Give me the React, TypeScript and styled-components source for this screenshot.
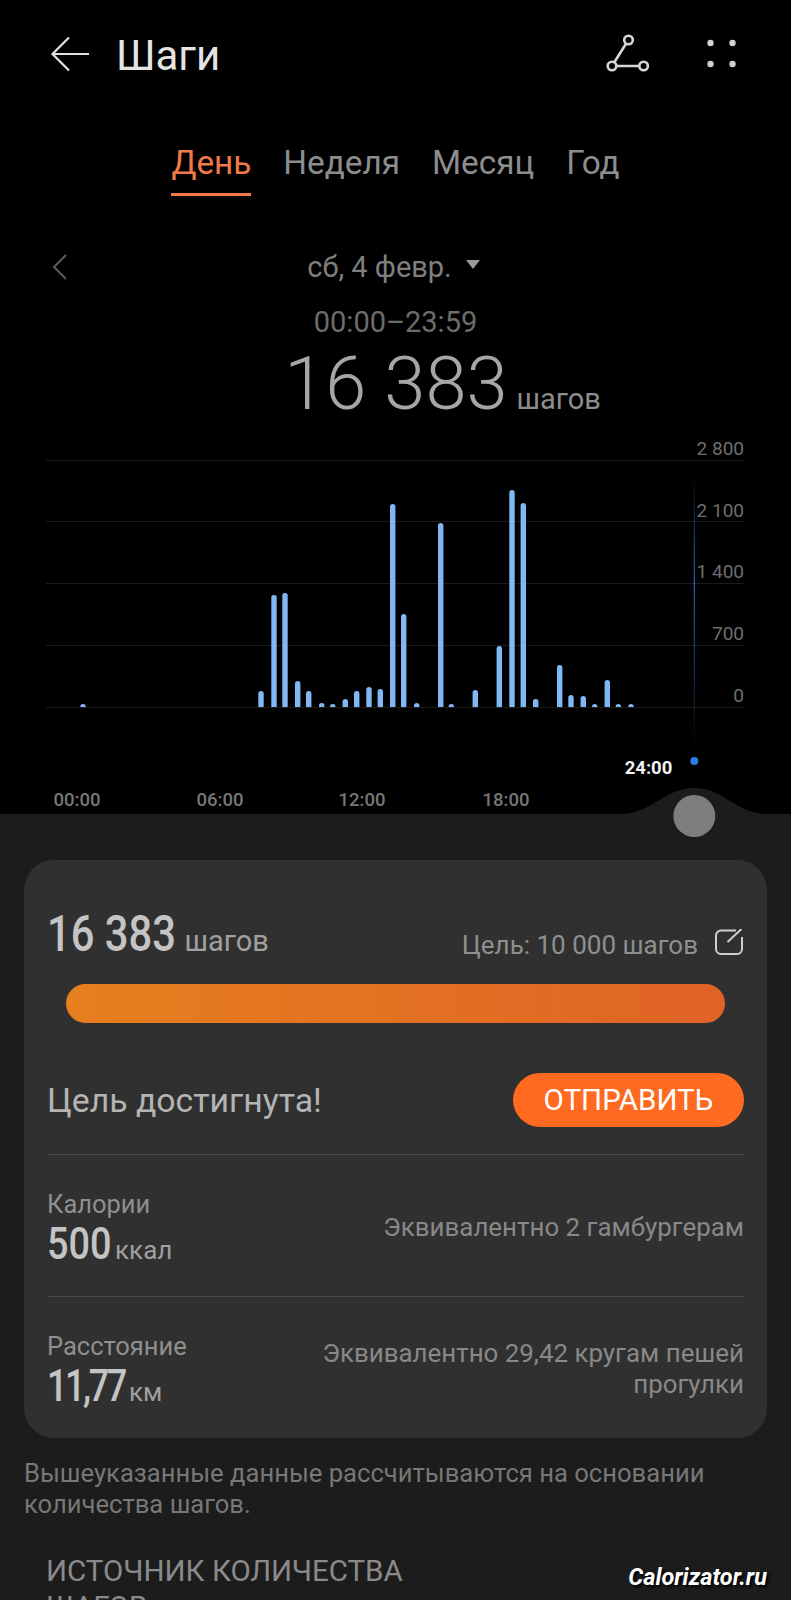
import React from "react";
import styled, { createGlobalStyle } from "styled-components";

const GlobalStyle = createGlobalStyle`
  html, body {
    margin: 0;
    padding: 0;
    background: #000;
  }
  * {
    box-sizing: border-box;
  }
`;

const Page = styled.div`
  position: relative;
  width: 791px;
  height: 1600px;
  overflow: hidden;
  background: #000;
  font-family: Roboto, "Noto Sans", sans-serif;
  display: flex;
  flex-direction: column;
`;

const Top = styled.section`
  height: 814px;
  flex: none;
  display: flex;
  flex-direction: column;
`;

const Header = styled.header`
  height: 110px;
  padding: 0 54px 0 50px;
  display: flex;
  align-items: center;
`;

const Title = styled.h1`
  flex: 1;
  margin: 0 0 0 26px;
  font-size: 42px;
  font-weight: 400;
  color: #e4e4e4;
`;

const BackIcon = styled.svg`
  margin-bottom: 3px;
`;

const HeaderIcons = styled.div`
  display: flex;
  align-items: center;
  gap: 57px;
`;

const ShareIcon = styled.svg`
  margin-bottom: 4px;
`;

const MoreIcon = styled.svg`
  margin-bottom: 2px;
`;

const Tabs = styled.nav`
  height: 92px;
  display: flex;
  justify-content: center;
  align-items: flex-start;
  gap: 32px;
  padding: 33px 0 0 0;
`;

const Tab = styled.div<{ $active?: boolean }>`
  height: 53px;
  font-size: 33.3px;
  line-height: 40px;
  color: ${(p) => (p.$active ? "#f0794a" : "#8d8d8d")};
  border-bottom: ${(p) => (p.$active ? "3px solid #f0794a" : "none")};
`;

const DateRow = styled.div`
  position: relative;
  height: 48px;
  margin-top: 41px;
  padding-right: 4px;
  display: flex;
  justify-content: center;
  align-items: center;
  gap: 14px;
  font-size: 29px;
  color: #7f7f7f;
`;

const PrevDay = styled.svg`
  position: absolute;
  left: 52px;
  top: 11px;
`;

const Caret = styled.span`
  width: 0;
  height: 0;
  margin-top: -6px;
  border-left: 7px solid transparent;
  border-right: 7px solid transparent;
  border-top: 9px solid #9a9a9a;
`;

const TimeRange = styled.div`
  height: 34px;
  margin-top: 14px;
  text-align: center;
  font-size: 29px;
  line-height: 34px;
  color: #6c6c6c;
`;

const Total = styled.div`
  height: 68px;
  margin-top: 11px;
  display: flex;
  justify-content: center;
  align-items: baseline;
  gap: 9px;
  padding-left: 94px;
  color: #a6a6a6;
`;

const TotalValue = styled.span`
  font-size: 74px;
  line-height: 68px;
  font-weight: 300;
`;

const TotalUnit = styled.span`
  font-size: 29px;
  color: #8d8d8d;
`;

const Chart = styled.svg`
  display: block;
  flex: none;
  margin-top: 18px;
  font-family: Roboto, sans-serif;
`;

const Sheet = styled.section`
  position: relative;
  flex: 1;
  background: #1c1c1c;
  padding: 46px 24px 0;
`;

const Bump = styled.svg`
  position: absolute;
  left: 620px;
  top: -26px;
`;

const Card = styled.div`
  height: 578px;
  background: #303030;
  border-radius: 30px;
  padding: 49px 23px 0;
`;

const GoalRow = styled.div`
  height: 50px;
  display: flex;
  align-items: center;
  justify-content: space-between;
`;

// the reference digits are a condensed face, so Roboto is squeezed and the
// space it leaves behind is trimmed off
const BigValue = styled.span<{ $size: number; $scale: number; $trim: number; $tracking?: number }>`
  display: inline-block;
  font-size: ${(p) => p.$size}px;
  line-height: 1;
  font-weight: 500;
  color: #c4c4c4;
  letter-spacing: ${(p) => p.$tracking ?? 0}px;
  transform: scaleX(${(p) => p.$scale});
  transform-origin: left center;
  margin-right: -${(p) => p.$trim}px;
`;

const Unit = styled.span<{ $size?: number }>`
  margin-left: 8px;
  font-size: ${(p) => p.$size ?? 26}px;
  color: #a0a0a0;
`;

const GoalText = styled.div`
  display: flex;
  align-items: center;
  gap: 17px;
  margin-top: 22px;
  font-size: 26px;
  color: #8f8f8f;
`;

const EditIcon = styled.svg`
  margin: 0 1px 6px 0;
`;

const Progress = styled.div`
  height: 39px;
  margin: 25px 19px 0;
  border-radius: 20px;
  background: linear-gradient(90deg, #e67f1e, #e06326);
`;

const ReachedRow = styled.div`
  height: 54px;
  margin-top: 50px;
  display: flex;
  align-items: center;
  justify-content: space-between;
  font-size: 33.8px;
  color: #b4b4b4;
`;

const SendButton = styled.button`
  width: 231px;
  height: 54px;
  border: none;
  border-radius: 27px;
  background: #ff6a20;
  color: #fff;
  font: 400 29.5px Roboto, sans-serif;
`;

const StatRow = styled.div<{ $first?: boolean }>`
  height: 142px;
  margin-top: ${(p) => (p.$first ? "27px" : "0")};
  padding-top: 3px;
  display: flex;
  align-items: center;
  justify-content: space-between;
  border-top: 1px solid #484848;
`;

const StatLabel = styled.div`
  font-size: 25.5px;
  line-height: 32px;
  color: #8f8f8f;
`;

const StatValue = styled.div`
  display: flex;
  align-items: baseline;
  margin-top: 2px;
`;

const StatNote = styled.div`
  width: 440px;
  text-align: right;
  font-size: 25.9px;
  line-height: 31px;
  color: #888;
`;

const Footnote = styled.p`
  margin: 20px 0 0;
  font-size: 25.6px;
  line-height: 31px;
  color: #777;
`;

const SourceHeading = styled.h2`
  margin: 33px 0 0 22px;
  width: 420px;
  font-size: 29.5px;
  line-height: 36px;
  font-weight: 400;
  color: #8a8a8a;
`;

const Watermark = styled.div`
  position: absolute;
  right: 24px;
  top: 1563px;
  font-size: 23.5px;
  font-weight: 700;
  font-style: italic;
  color: #fff;
  text-shadow: 2px 2px 3px #000;
`;

// bar centre x and top y, baseline is BASE
const BASE = 707;
const bars: [number, number][] = [
  [83, 704], [261, 691], [274, 595], [285, 593], [297.7, 681], [308.7, 691],
  [321.7, 703], [332.7, 704], [345.3, 699], [356.7, 691], [369, 687], [380.3, 689],
  [392.7, 504], [403.7, 614], [416.7, 703], [440.7, 523], [451.3, 704], [475.3, 690],
  [499.3, 646], [512, 490], [523.3, 503], [535.7, 699], [559.7, 665], [571, 695],
  [583.3, 696], [594.7, 704], [607.3, 680], [618.3, 704], [631, 704],
];

const gridLines = [460, 521, 583, 645, 707];
const axisLabels: [string, number][] = [
  ["2 800", 455], ["2 100", 517], ["1 400", 578], ["700", 640], ["0", 702],
];
const timeLabels: [string, number][] = [
  ["00:00", 77], ["06:00", 220], ["12:00", 362], ["18:00", 506],
];

const CHART_TOP = 436;

const StepsChart: React.FC = () => (
  <Chart width={791} height={378} viewBox={`0 ${CHART_TOP} 791 378`}>
    <defs>
      <linearGradient id="cursor" x1="0" y1="0" x2="0" y2="1">
        <stop offset="0" stopColor="#2f78dc" stopOpacity="0" />
        <stop offset="0.4" stopColor="#2f78dc" stopOpacity="1" />
        <stop offset="1" stopColor="#2f78dc" stopOpacity="0" />
      </linearGradient>
    </defs>
    {gridLines.map((y) => (
      <line key={y} x1={46} x2={744} y1={y + 0.5} y2={y + 0.5} stroke="#1c1c1c" />
    ))}
    {bars.map(([x, top]) => (
      <path
        key={x}
        d={`M${x - 2.7} ${BASE} V${top + 2.5} a2.7 2.5 0 0 1 5.4 0 V${BASE} Z`}
        fill="#7fb8f5"
      />
    ))}
    <rect x={693.8} y={472} width={1} height={278} fill="url(#cursor)" />
    <circle cx={694.3} cy={761} r={4} fill="#2a7de1" />
    {axisLabels.map(([label, y]) => (
      <text key={label} x={744} y={y} textAnchor="end" fontSize={19} fill="#6e6e6e">
        {label}
      </text>
    ))}
    {timeLabels.map(([label, x]) => (
      <text key={label} x={x} y={806} textAnchor="middle" fontSize={18.5} fontWeight={500} fill="#777">
        {label}
      </text>
    ))}
    <text x={648.5} y={774} textAnchor="middle" fontSize={18.5} fontWeight={700} fill="#f2f2f2">
      24:00
    </text>
  </Chart>
);

const App: React.FC = () => (
  <Page>
    <GlobalStyle />
    <Top>
      <Header>
        <BackIcon width="40" height="36" viewBox="0 0 40 36" fill="none" stroke="#e0e0e0" strokeWidth="2.2">
          <path d="M39 18H2.5M19 1.5L2.5 18 19 34.5" />
        </BackIcon>
        <Title>Шаги</Title>
        <HeaderIcons>
          <ShareIcon width="44" height="38" viewBox="0 0 44 38" fill="none" stroke="#d6d6d6" strokeWidth="2.6">
            <circle cx="22.5" cy="6" r="4.3" />
            <circle cx="6" cy="32" r="4.3" />
            <circle cx="37.6" cy="32" r="4.3" />
            <path d="M20 9.8L8.3 28.3M10.3 32h23" />
          </ShareIcon>
          <MoreIcon width="30" height="30" viewBox="0 0 30 30" fill="#d0d0d0">
            <circle cx="3.5" cy="4" r="3.2" />
            <circle cx="25.5" cy="4" r="3.2" />
            <circle cx="3.5" cy="25" r="3.2" />
            <circle cx="25.5" cy="25" r="3.2" />
          </MoreIcon>
        </HeaderIcons>
      </Header>
      <Tabs>
        <Tab $active>День</Tab>
        <Tab>Неделя</Tab>
        <Tab>Месяц</Tab>
        <Tab>Год</Tab>
      </Tabs>
      <DateRow>
        <PrevDay width="16" height="26" viewBox="0 0 16 26" fill="none" stroke="#5a5a5a" strokeWidth="2">
          <path d="M14 1L2 13l12 12" />
        </PrevDay>
        <span>сб, 4 февр.</span>
        <Caret />
      </DateRow>
      <TimeRange>00:00–23:59</TimeRange>
      <Total>
        <TotalValue>16 383</TotalValue>
        <TotalUnit>шагов</TotalUnit>
      </Total>
      <StepsChart />
    </Top>
    <Sheet>
      <Bump width="148" height="64" viewBox="0 0 148 64">
        <path d="M0 26C32 26 44 0 74 0S116 26 148 26V30H0Z" fill="#1c1c1c" />
        <circle cx="74.3" cy="28" r="21" fill="#7d7d7d" />
      </Bump>
      <Card>
        <GoalRow>
          <div>
            <BigValue $size={50} $scale={0.835} $trim={25}>
              16 383
            </BigValue>
            <Unit $size={29}>шагов</Unit>
          </div>
          <GoalText>
            Цель: 10 000 шагов
            <EditIcon width="28" height="26" viewBox="0 0 28 26" fill="none" stroke="#cfcfcf" strokeWidth="2">
              <path d="M21 1.5H6a5 5 0 0 0-5 5v13.5a5 5 0 0 0 5 5h16a5 5 0 0 0 5-5V8" />
              <path d="M12.5 13L26.5 0" />
            </EditIcon>
          </GoalText>
        </GoalRow>
        <Progress />
        <ReachedRow>
          Цель достигнута!
          <SendButton>ОТПРАВИТЬ</SendButton>
        </ReachedRow>
        <StatRow $first>
          <div>
            <StatLabel>Калории</StatLabel>
            <StatValue>
              <BigValue $size={44} $scale={0.86} $trim={15}>
                500
              </BigValue>
              <Unit>ккал</Unit>
            </StatValue>
          </div>
          <StatNote>Эквивалентно 2 гамбургерам</StatNote>
        </StatRow>
        <StatRow>
          <div>
            <StatLabel>Расстояние</StatLabel>
            <StatValue>
              <BigValue $size={44} $scale={0.82} $trim={21} $tracking={-3}>
                11,77
              </BigValue>
              <Unit>км</Unit>
            </StatValue>
          </div>
          <StatNote>Эквивалентно 29,42 кругам пешей прогулки</StatNote>
        </StatRow>
      </Card>
      <Footnote>Вышеуказанные данные рассчитываются на основании количества шагов.</Footnote>
      <SourceHeading>ИСТОЧНИК КОЛИЧЕСТВА ШАГОВ</SourceHeading>
    </Sheet>
    <Watermark>Calorizator.ru</Watermark>
  </Page>
);

export default App;
